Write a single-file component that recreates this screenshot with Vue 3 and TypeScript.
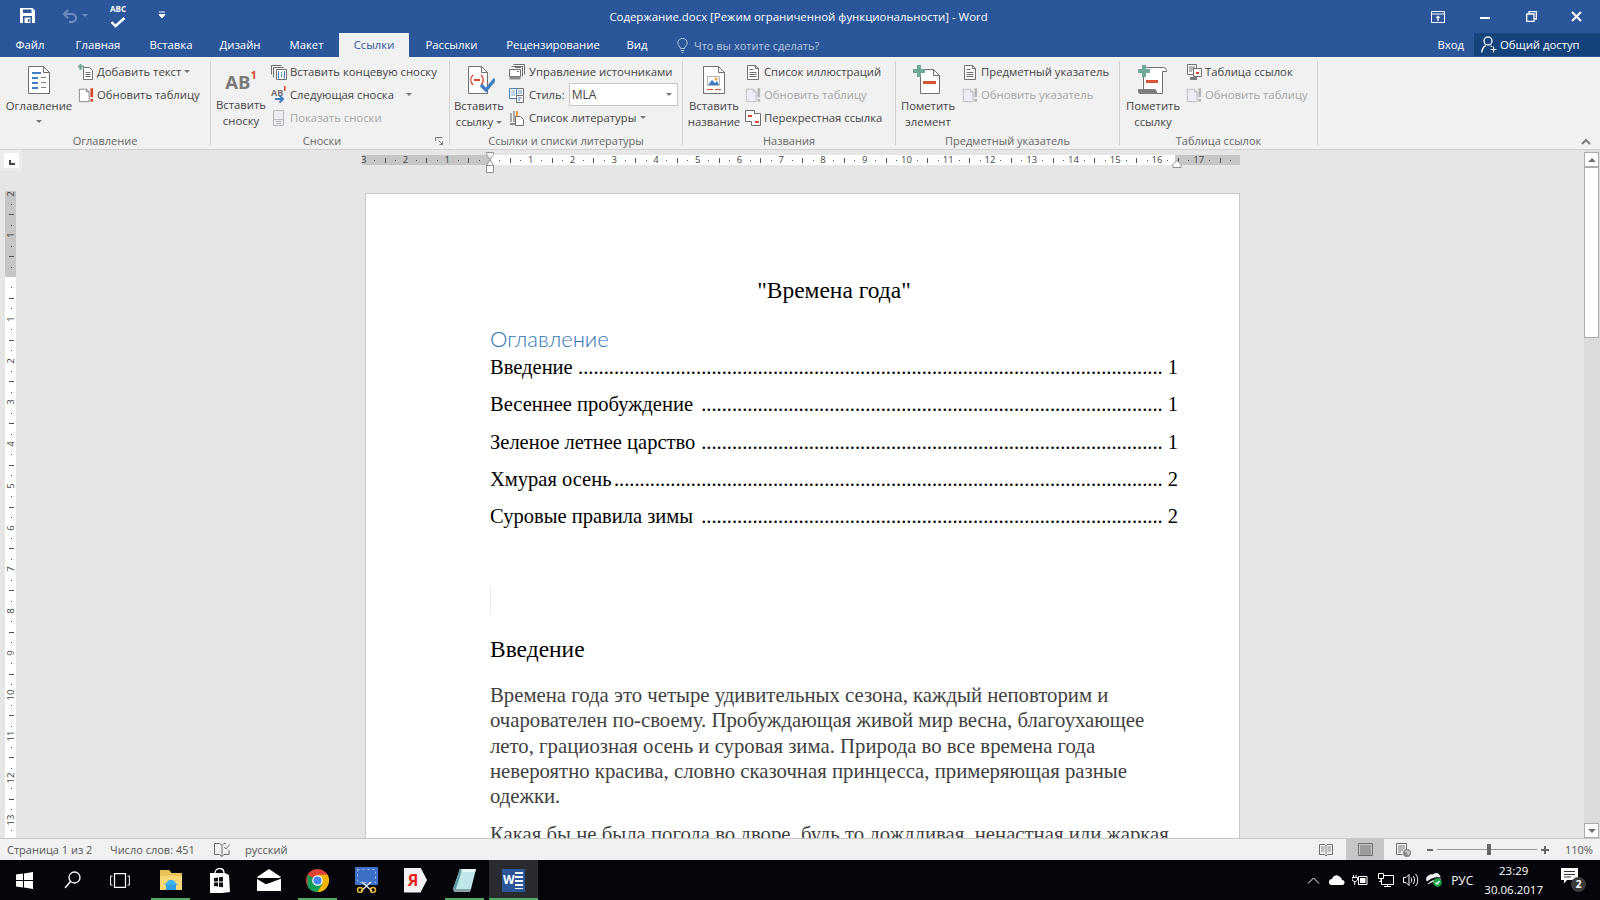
<script setup lang="ts">
import { computed } from 'vue'

const tabs = [
  { name: 'Файл', w: 60 },
  { name: 'Главная', w: 76 },
  { name: 'Вставка', w: 70 },
  { name: 'Дизайн', w: 68 },
  { name: 'Макет', w: 65 },
  { name: 'Ссылки', w: 70, active: true },
  { name: 'Рассылки', w: 85 },
  { name: 'Рецензирование', w: 118 },
  { name: 'Вид', w: 50 },
]

const toc = [
  { title: 'Введение', page: 1, dots: 114 },
  { title: 'Весеннее пробуждение', page: 1, dots: 90 },
  { title: 'Зеленое летнее царство', page: 1, dots: 90 },
  { title: 'Хмурая осень', page: 2, dots: 107 },
  { title: 'Суровые правила зимы', page: 2, dots: 90 },
]

const STEP = 41.75

// quarter-inch style marks for both rulers
function buildMarks(from: number, to: number) {
  const marks: { pos: number; kind: string; label: string }[] = []
  for (let q = from * 4; q <= to * 4; q++) {
    const rem = ((q % 4) + 4) % 4
    if (q === 0) continue
    marks.push({
      pos: (q / 4) * STEP,
      kind: rem === 0 ? 'num' : rem === 2 ? 'tick' : 'dot',
      label: rem === 0 ? String(Math.abs(q / 4)) : '',
    })
  }
  return marks
}

const hMarks = computed(() => buildMarks(-3, 17.75).map((m) => ({ ...m, pos: m.pos + 127 })))
const vMarks = computed(() => buildMarks(-2, 13.75).map((m) => ({ ...m, pos: m.pos + 86 })))
</script>

<template>
  <div class="word">
    <svg class="defs" width="0" height="0">
      <symbol id="i-update" viewBox="0 0 18 18">
        <path d="M1.500 2.500h8l3 3v11h-11z" fill="#fff" stroke="#7d7d7d" />
        <path d="M9.500 2.500v3h3" fill="none" stroke="#7d7d7d" />
        <path d="M14 1.500h3v10h-3zM14 13.500h3v3h-3z" fill="#d6492f" />
      </symbol>
      <symbol id="i-update-off" viewBox="0 0 18 18">
        <path d="M1.500 2.500h8l3 3v11h-11z" fill="#f0ecf3" stroke="#b9b9b9" />
        <path d="M9.500 2.500v3h3" fill="none" stroke="#b9b9b9" />
        <path d="M14 1.500h3v10h-3zM14 13.500h3v3h-3z" fill="#b5b5b5" />
      </symbol>
      <symbol id="i-lines" viewBox="0 0 16 18">
        <path d="M2.500 2.500h8l3 3v11h-11z" fill="#fff" stroke="#6f6f6f" />
        <path d="M10.500 2.500v3h3" fill="none" stroke="#6f6f6f" />
        <path d="M4.500 6.500h4M4.500 9.500h7M4.500 11.500h7M4.500 13.500h7" stroke="#6f6f6f" />
      </symbol>
    </svg>

    <!-- title bar -->
    <header class="titlebar">
      <div class="qat">
        <svg class="q-save" width="15" height="15" viewBox="0 0 15 15">
          <path d="M0 0h12.500L15 2.500V15H0z" fill="#fff" />
          <path d="M3 1.500h8.500v3.500H3z" fill="#2b579a" />
          <path d="M3 8h9v7H3z" fill="#2b579a" />
          <path d="M4.500 9.500h6V15h-6z" fill="#fff" />
          <path d="M8 11h1.500v3H8z" fill="#2b579a" />
        </svg>
        <svg class="q-undo" width="16" height="15" viewBox="0 0 16 15">
          <path d="M6 2 2 6l4 4M2.500 6H10a4 4 0 0 1 0 8H7" fill="none" stroke="#6f8dbb" stroke-width="2" />
        </svg>
        <i class="caret q-undo-caret" />
        <svg class="q-spell" width="16" height="18" viewBox="0 0 16 18">
          <path d="M1.500 12l4 4 9-8" fill="none" stroke="#fff" stroke-width="2.400" />
        </svg>
        <span class="q-abc">ABC</span>
        <svg class="q-more" width="8" height="8" viewBox="0 0 8 8">
          <path d="M1 1h6M1 3.500h6L4 7z" stroke="#fff" fill="#fff" />
        </svg>
      </div>
      <div class="doc-title">Содержание.docx [Режим ограниченной функциональности] - Word</div>
      <div class="win-btns">
        <svg class="w-opt" width="14" height="12" viewBox="0 0 14 12">
          <path d="M.5.500h13v11H.5zM.5 3h13" fill="none" stroke="#fff" />
          <path d="M7 4.500 4.500 7h1.800v3h1.400V7h1.800z" fill="#fff" />
        </svg>
        <svg class="w-min" width="10" height="2" viewBox="0 0 10 2"><path d="M0 0h10v2H0z" fill="#fff" /></svg>
        <svg class="w-max" width="11" height="11" viewBox="0 0 11 11">
          <path d="M3 2.500V.7h7.300V8H8.500" fill="none" stroke="#fff" stroke-width="1.300" />
          <path d="M.7 3h7.300v7.300H.7z" fill="none" stroke="#fff" stroke-width="1.300" />
        </svg>
        <svg width="11" height="11" viewBox="0 0 11 11">
          <path d="M1 1l9 9M10 1l-9 9" stroke="#fff" stroke-width="2" />
        </svg>
      </div>
    </header>

    <!-- tabs -->
    <nav class="tabs">
      <div
        v-for="tab in tabs"
        :key="tab.name"
        class="tab"
        :class="{ active: tab.active }"
        :style="{ width: `${tab.w}px` }"
      >{{ tab.name }}</div>
      <div class="tell">
        <svg width="11" height="15" viewBox="0 0 11 15">
          <path d="M3.500 10.500C3 8 .8 7.500.8 5a4.700 4.700 0 0 1 9.400 0c0 2.500-2.200 3-2.700 5.500zM3.800 12.500h3.400M4.500 14.500h2" fill="none" stroke="#b4c5dd" />
        </svg>
        <span>Что вы хотите сделать?</span>
      </div>
      <div class="login">Вход</div>
      <div class="share">
        <svg width="16" height="17" viewBox="0 0 16 17">
          <circle cx="7" cy="5" r="4" fill="none" stroke="#e6ebf3" stroke-width="1.500" />
          <path d="M.8 16.500c.3-3.500 2-6 3.900-7M9.500 9.800c.6.300 1 .5 1.400.9" fill="none" stroke="#e6ebf3" stroke-width="1.500" />
          <path d="M12.500 10.500v6M9.500 13.500h6" stroke="#e6ebf3" stroke-width="1.200" />
        </svg>
        <span>Общий доступ</span>
      </div>
    </nav>

    <!-- ribbon -->
    <section class="ribbon">
      <div class="group g1">
        <div class="group-body">
          <div class="big b1">
            <svg class="big-icon" width="32" height="32" viewBox="0 0 32 32">
              <path d="M5.500 2.500h15l6 6v21h-21z" fill="#fff" stroke="#6f6f6f" />
              <path d="M20.500 2.500v6h6" fill="none" stroke="#6f6f6f" />
              <path d="M9 8h9v2H9zM9 13h6v2H9zM9 18h6v2H9zM9 23h6v2H9z" fill="#3f7fc1" />
              <path d="M18 13h5v1h-5zM18 18h5v1h-5zM18 23h5v1h-5z" fill="#7d7d7d" />
            </svg>
            <span>Оглавление</span>
            <i class="caret caret-big" />
          </div>
          <div class="col">
            <div class="sm">
              <svg width="16" height="18" viewBox="0 0 16 18">
                <path d="M5.500 4.500h6l3 3v9h-9z" fill="#fff" stroke="#6f6f6f" />
                <path d="M7.500 9.500h5M7.500 11.500h5M7.500 13.500h5" stroke="#6f6f6f" />
                <path d="M2.500 1v6M0 3.500h6" stroke="#6ea898" stroke-width="2" />
              </svg>
              <span class="sm-t">Добавить текст</span><i class="caret caret-near" />
            </div>
            <div class="sm">
              <svg width="16" height="18"><use href="#i-update" /></svg>
              <span class="sm-t">Обновить таблицу</span>
            </div>
          </div>
        </div>
        <div class="group-label">Оглавление</div>
      </div>

      <div class="group g2">
        <div class="group-body">
          <div class="big b2">
            <div class="ab-mark"><span class="ab">AB</span><sup>1</sup></div>
            <span>Вставить</span>
            <span>сноску</span>
          </div>
          <div class="col">
            <div class="sm">
              <svg width="16" height="18" viewBox="0 0 16 18">
                <path d="M.5 2.500h10M.5 2.500v9M2.500 4.500h10M2.500 4.500v10" fill="none" stroke="#6f6f6f" />
                <path d="M5.500 6.500h10v10h-10z" fill="#fff" stroke="#6f6f6f" />
                <path d="M7.500 8v7h1M13.500 8v7h-1M10.500 9v1M10.500 11v3" fill="none" stroke="#3f7fc1" stroke-width="1.100" />
              </svg>
              <span class="sm-t">Вставить концевую сноску</span>
            </div>
            <div class="sm">
              <svg width="16" height="18" viewBox="0 0 16 18">
                <text x="0" y="10" class="ab-small">AB</text>
                <path d="M13 0h1.500v5H13z" fill="#d6492f" />
                <path d="M4 13h7M8.500 9.500 12 13l-3.500 3.500" fill="none" stroke="#3f7fc1" stroke-width="2" />
              </svg>
              <span class="sm-t">Следующая сноска</span><i class="caret caret-far" />
            </div>
            <div class="sm off">
              <svg width="16" height="18" viewBox="0 0 16 18">
                <path d="M2.500 1.500h10v15h-10z" fill="#f0ecf3" stroke="#b9b9b9" />
                <path d="M2.500 10.500h10M5 12.500h5M5 14.500h5" stroke="#b9b9b9" />
              </svg>
              <span class="sm-t">Показать сноски</span>
            </div>
          </div>
        </div>
        <div class="group-label label-short">Сноски</div>
        <svg class="launcher" width="8" height="8" viewBox="0 0 8 8">
          <path d="M.5 4V.5H7.500M7.500 7.500 3.500 3.500M7.500 4.500v3h-3" fill="none" stroke="#7d7d7d" />
        </svg>
      </div>

      <div class="group g3">
        <div class="group-body">
          <div class="big b3">
            <svg class="big-icon" width="32" height="32" viewBox="0 0 32 32">
              <path d="M5.500 2.500h13l6 6v21h-19z" fill="#fff" stroke="#6f6f6f" />
              <path d="M18.500 2.500v6h6" fill="none" stroke="#6f6f6f" />
              <path d="M10 11c-3 3-3 7 0 10M18 11c3 3 3 7 0 10" fill="none" stroke="#d6492f" stroke-width="1.400" />
              <path d="M11 15h6v2h-6z" fill="#d6492f" />
              <path d="M18 21l5 5 9-11" fill="none" stroke="#3f7fc1" stroke-width="3.400" />
            </svg>
            <span>Вставить</span>
            <span>ссылку<i class="caret caret-in" /></span>
          </div>
          <div class="col">
            <div class="sm">
              <svg width="16" height="18" viewBox="0 0 16 18">
                <path d="M4.500 1.500h11v10M2.500 3.500h11v10" fill="none" stroke="#6f6f6f" />
                <path d="M.5 6.500h11v7H.5z" fill="#fff" stroke="#6f6f6f" />
                <path d="M.5 13.500h11v3H.5z" fill="#8a8a8a" />
                <path d="M6 4.500h6M8 8.500h2" stroke="#6f6f6f" />
              </svg>
              <span class="sm-t">Управление источниками</span>
            </div>
            <div class="sm style-row">
              <svg width="16" height="18" viewBox="0 0 16 18">
                <path d="M.5 2.500h7v10h-7z" fill="#fff" stroke="#3f7fc1" />
                <path d="M7.500 2.500h7v7" fill="none" stroke="#6f6f6f" />
                <path d="M2 5h4M2 7h4M2 9h4M9 5h4M9 7h4" stroke="#7d9ec4" />
                <path d="M7.500 9.500h7v7h-7z" fill="#fff" stroke="#6f6f6f" />
                <path d="M9 12h4M9 14h2" stroke="#3f7fc1" />
              </svg>
              <span class="sm-t">Стиль:</span>
              <div class="combo"><span>MLA</span><i class="caret" /></div>
            </div>
            <div class="sm">
              <svg width="16" height="18" viewBox="0 0 16 18">
                <path d="M1 4h2v9H1zM4 2h2v11H4z" fill="#a9a9a9" />
                <path d="M7 2h2v5H7z" fill="#e8a33a" />
                <path d="M6.500 7.500h5l3 3v6h-8z" fill="#fff" stroke="#6f6f6f" />
                <path d="M1 14h5v2H1z" fill="#8a8a8a" />
              </svg>
              <span class="sm-t">Список литературы</span><i class="caret" />
            </div>
          </div>
        </div>
        <div class="group-label">Ссылки и списки литературы</div>
      </div>

      <div class="group g4">
        <div class="group-body">
          <div class="big b4">
            <svg class="big-icon" width="32" height="32" viewBox="0 0 32 32">
              <path d="M5.500 2.500h15l6 6v21h-21z" fill="#fff" stroke="#6f6f6f" />
              <path d="M20.500 2.500v6h6" fill="none" stroke="#6f6f6f" />
              <path d="M9.500 12.500h12v9h-12z" fill="#fff" stroke="#b5b5b5" />
              <path d="M10 21l4-5 3 3 2-2 2 4z" fill="#3f7fc1" />
              <circle cx="18" cy="15" r="1.500" fill="#e8a33a" />
              <path d="M9 25h6v1H9zM17 25h6v1h-6z" fill="#d6492f" />
            </svg>
            <span>Вставить</span>
            <span>название</span>
          </div>
          <div class="col">
            <div class="sm">
              <svg width="16" height="18"><use href="#i-lines" /></svg>
              <span class="sm-t">Список иллюстраций</span>
            </div>
            <div class="sm off">
              <svg width="16" height="18"><use href="#i-update-off" /></svg>
              <span class="sm-t">Обновить таблицу</span>
            </div>
            <div class="sm">
              <svg width="16" height="18" viewBox="0 0 16 18">
                <path d="M.5 1.500h9v11H.5z" fill="#fff" stroke="#6f6f6f" />
                <path d="M9.500 4.500h6v12h-9v-4" fill="#fff" stroke="#6f6f6f" />
                <path d="M3 6h4v2H3zM10 12h4v2h-4z" fill="#d6492f" />
              </svg>
              <span class="sm-t">Перекрестная ссылка</span>
            </div>
          </div>
        </div>
        <div class="group-label">Названия</div>
      </div>

      <div class="group g5">
        <div class="group-body">
          <div class="big b5">
            <svg class="big-icon" width="32" height="32" viewBox="0 0 32 32">
              <path d="M8.500 5.500h13l6 6v18h-19z" fill="#fff" stroke="#6f6f6f" />
              <path d="M21.500 5.500v6h6" fill="none" stroke="#6f6f6f" />
              <path d="M5 1h4v4h4v4H9v4H5V9H1V5h4z" fill="#6ea898" />
              <path d="M11 17h13v3H11z" fill="#d6552f" />
            </svg>
            <span>Пометить</span>
            <span>элемент</span>
          </div>
          <div class="col">
            <div class="sm">
              <svg width="16" height="18"><use href="#i-lines" /></svg>
              <span class="sm-t">Предметный указатель</span>
            </div>
            <div class="sm off">
              <svg width="16" height="18"><use href="#i-update-off" /></svg>
              <span class="sm-t">Обновить указатель</span>
            </div>
          </div>
        </div>
        <div class="group-label">Предметный указатель</div>
      </div>

      <div class="group g6">
        <div class="group-body">
          <div class="big b6">
            <svg class="big-icon" width="32" height="32" viewBox="0 0 32 32">
              <path d="M6.500 29.500v-23a3 3 0 0 1 3-3h17a3 3 0 0 1 3 3v1h-4v22z" fill="#fff" stroke="#6f6f6f" />
              <path d="M1 25h17c1 0 1.500 2 2 3s1 2 2 2H3c-2 0-2-3-2-5z" fill="#7d7d7d" />
              <path d="M5 1h4v4h4v4H9v4H5V9H1V5h4z" fill="#6ea898" />
              <path d="M9 16h12v3H9z" fill="#d6552f" />
            </svg>
            <span>Пометить</span>
            <span>ссылку</span>
          </div>
          <div class="col">
            <div class="sm">
              <svg width="16" height="18" viewBox="0 0 16 18">
                <path d="M1.500 1.500h9v10h-9z" fill="#fff" stroke="#6f6f6f" />
                <path d="M3 4h6M3 6h6M3 8h3" stroke="#6f6f6f" />
                <path d="M7.500 5.500h8v8h-8z" fill="#fff" stroke="#6f6f6f" />
                <path d="M10 9h3v2h-3z" fill="#d6492f" />
                <path d="M4 14h7v3H4z" fill="#7d7d7d" />
              </svg>
              <span class="sm-t">Таблица ссылок</span>
            </div>
            <div class="sm off">
              <svg width="16" height="18"><use href="#i-update-off" /></svg>
              <span class="sm-t">Обновить таблицу</span>
            </div>
          </div>
        </div>
        <div class="group-label">Таблица ссылок</div>
      </div>

      <svg class="collapse" width="10" height="7" viewBox="0 0 10 7">
        <path d="M1 6l4-4 4 4" fill="none" stroke="#7d7d7d" stroke-width="2" />
      </svg>
    </section>

    <!-- document area -->
    <main class="workspace">
      <div class="canvas">
        <div class="ruler-row">
          <div class="corner"><div class="corner-box"><i /></div></div>
          <div class="h-ruler">
            <div class="r-grey r-left" />
            <div class="r-white" />
            <div class="r-grey r-right" />
            <template v-for="m in hMarks" :key="m.pos">
              <span v-if="m.kind === 'num'" class="h-num" :style="{ left: `${m.pos}px` }">{{ m.label }}</span>
              <i v-else :class="`h-${m.kind}`" :style="{ left: `${m.pos}px` }" />
            </template>
            <svg class="indent-left" width="10" height="22" viewBox="0 0 10 22">
              <path d="M1.500.5h7v2L5 7.500 1.500 2.500zM5 7.500l3.500 6h-7zM1.500 13.500h7v7h-7z" fill="#fff" stroke="#8f8f8f" />
            </svg>
            <svg class="indent-right" width="10" height="8" viewBox="0 0 10 8">
              <path d="M5 .5l4 4v3H1v-3z" fill="#fff" stroke="#8f8f8f" />
            </svg>
          </div>
        </div>
        <div class="doc-row">
          <div class="v-ruler">
            <div class="v-grey" />
            <template v-for="m in vMarks" :key="m.pos">
              <span v-if="m.kind === 'num'" class="v-num" :style="{ top: `${m.pos}px` }">{{ m.label }}</span>
              <i v-else :class="`v-${m.kind}`" :style="{ top: `${m.pos}px` }" />
            </template>
          </div>
          <article class="page">
            <h1 class="doc-h">"Времена года"</h1>
            <h2 class="toc-h">Оглавление</h2>
            <div v-for="row in toc" :key="row.title" class="toc-row">
              <span class="toc-title">{{ row.title }}</span>
              <span class="toc-dots">{{ '.'.repeat(row.dots) }}</span>
              <span class="toc-page">{{ row.page }}</span>
            </div>
            <div class="empty-mark" />
            <h3 class="intro-h">Введение</h3>
            <p class="para">Времена года это четыре удивительных сезона, каждый неповторим и очарователен по-своему. Пробуждающая живой мир весна, благоухающее лето, грациозная осень и суровая зима. Природа во все времена года невероятно красива, словно сказочная принцесса, примеряющая разные одежки.</p>
            <p class="para para-next">Какая бы не была погода во дворе, будь то дождливая, ненастная или жаркая,</p>
          </article>
        </div>
      </div>
      <aside class="scrollbar">
        <div class="sb-btn"><i class="sb-up" /></div>
        <div class="sb-thumb" />
        <div class="sb-track" />
        <div class="sb-btn"><i class="sb-down" /></div>
      </aside>
    </main>

    <!-- status bar -->
    <footer class="status">
      <span class="st-page">Страница 1 из 2</span>
      <span class="st-words">Число слов: 451</span>
      <svg class="st-book" width="16" height="14" viewBox="0 0 16 14">
        <path d="M.5.500h5l2.500 2v11l-2.500-2h-5zM8 2.500l2-2h2M8 13.500l2-2h5V7" fill="none" stroke="#6f6f6f" />
        <path d="M10 4l2 2 3.500-4.500" fill="none" stroke="#6f6f6f" />
      </svg>
      <span class="st-lang">русский</span>
      <svg class="st-read" width="14" height="14" viewBox="0 0 14 14">
        <path d="M.5 1.500h5.500l1 1 1-1h5.500v10h-5l-1.500 1.500-1.500-1.500h-5z" fill="none" stroke="#6f6f6f" />
        <path d="M2 4h3.500M2 6h3.500M2 8h3.500M8.500 4H12M8.500 6H12M8.500 8H12M7 2.500v9" stroke="#8a8a8a" />
      </svg>
      <div class="st-print">
        <svg width="15" height="13" viewBox="0 0 15 13">
          <path d="M.5.500h14v12H.5z" fill="none" stroke="#6f6f6f" />
          <path d="M2 3h11M2 5h11M2 7h11M2 9h11M2 11h11" stroke="#6f6f6f" />
        </svg>
      </div>
      <svg class="st-web" width="15" height="14" viewBox="0 0 15 14">
        <path d="M.5.500h10v8M.5.500v11h6" fill="none" stroke="#6f6f6f" />
        <path d="M2 3h7M2 5h7M2 7h5M2 9h3" stroke="#7d7d7d" />
        <circle cx="11" cy="10" r="4" fill="#8a8a8a" />
        <path d="M8 9h3v2l2 1 1-3-3-2z" fill="#cfcfcf" />
      </svg>
      <i class="z-minus" />
      <div class="z-slider"><i /></div>
      <i class="z-plus" />
      <span class="z-pct">110%</span>
    </footer>

    <!-- windows taskbar -->
    <footer class="taskbar">
      <div class="tb-slot tb-sys">
        <svg width="17" height="17" viewBox="0 0 17 17">
          <path d="M0 2.500 7 1.500v6.500H0zM8 1.400 17 0v8H8zM0 9h7v6.500L0 14.500zM8 9h9v8l-9-1.400z" fill="#fff" />
        </svg>
      </div>
      <div class="tb-slot tb-sys">
        <svg width="17" height="18" viewBox="0 0 17 18">
          <circle cx="10.500" cy="6.500" r="5.500" fill="none" stroke="#fff" stroke-width="1.300" />
          <path d="M6.500 10.500 1 17" stroke="#fff" stroke-width="1.500" />
        </svg>
      </div>
      <div class="tb-slot tb-sys">
        <svg width="20" height="15" viewBox="0 0 20 15">
          <path d="M4.500.7h11v13.600h-11z" fill="none" stroke="#fff" stroke-width="1.200" />
          <path d="M2.500 3H.6v9h1.900M17.500 3h1.900v9h-1.900" fill="none" stroke="#fff" />
        </svg>
      </div>
      <div class="tb-gap" />
      <div class="tb-slot on">
        <svg width="22" height="20" viewBox="0 0 22 20">
          <path d="M0 0h9l2 2v2H0z" fill="#e8bd52" />
          <path d="M0 3h22v17H0z" fill="#f7d774" />
          <path d="M0 3h22v3H0z" fill="#e9c25a" />
          <path d="M6 13h10v7H6z" fill="#2f9fe0" />
          <path d="M9 10h4l5 5H4z" fill="#3fb3ee" />
        </svg>
      </div>
      <div class="tb-slot">
        <svg width="21" height="25" viewBox="0 0 21 25">
          <path d="M6 5c0-6 9-6 9 0" fill="none" stroke="#fff" stroke-width="1.300" />
          <path d="M1 5h15l4 2 1 17-8 1H1z" fill="#fff" />
          <path d="M5 10l4-.5v4H5zM10 9.300l4-.5v4.700h-4zM5 14.500h4v4l-4-.5zM10 14.500h4v4.700l-4-.5z" fill="#111" />
        </svg>
      </div>
      <div class="tb-slot">
        <svg width="24" height="22" viewBox="0 0 24 22">
          <path d="M0 8 12 0l12 8v1H0z" fill="#fff" />
          <path d="M0 9l9 6L24 9v13H0z" fill="#fff" />
          <path d="M0 9l9 5.500L24 9" fill="none" stroke="#0a0a0a" stroke-width="1.500" />
        </svg>
      </div>
      <div class="tb-slot on">
        <svg width="23" height="23" viewBox="0 0 48 48">
          <circle cx="24" cy="24" r="24" fill="#db4437" />
          <path d="M24 24 44.800 36A24 24 0 0 1 24 48 24 24 0 0 1 3.200 36L3 12z" fill="#0f9d58" />
          <path d="M24 12h20.800A24 24 0 0 1 44.800 36 24 24 0 0 1 24 48l10.400-18z" fill="#f4b400" />
          <circle cx="24" cy="24" r="11" fill="#fff" />
          <circle cx="24" cy="24" r="8.500" fill="#4285f4" />
        </svg>
      </div>
      <div class="tb-slot">
        <svg width="23" height="26" viewBox="0 0 23 26">
          <path d="M0 0h23v18H0z" fill="#3d6fc7" />
          <path d="M2.500 2.500h18v13h-18z" fill="none" stroke="#a9c4ee" stroke-dasharray="2 3" />
          <path d="M7 15l10 9M16 15 6 24" stroke="#e8e8e8" stroke-width="1.400" />
          <circle cx="5" cy="23" r="2.500" fill="none" stroke="#e9b93a" stroke-width="1.500" />
          <circle cx="18" cy="23" r="2.500" fill="none" stroke="#e9b93a" stroke-width="1.500" />
        </svg>
      </div>
      <div class="tb-slot">
        <div class="ya-tag"><span>Я</span></div>
      </div>
      <div class="tb-slot on">
        <svg width="24" height="23" viewBox="0 0 24 23">
          <path d="M7 0h16l-5 20H0z" fill="#bfe6e8" />
          <path d="M7 0h16l-1 3H6z" fill="#e7f6f6" />
          <path d="M0 20l7-20 2 1-6 19z" fill="#5f9ca4" />
          <path d="M0 20h18l-1 3H1z" fill="#8aa2a6" />
        </svg>
      </div>
      <div class="tb-slot on word-on">
        <div class="word-icon"><b>W</b><i /></div>
      </div>
      <div class="tray">
        <svg width="13" height="7" viewBox="0 0 13 7"><path d="M1 6.500 6.500 1 12 6.500" fill="none" stroke="#fff" /></svg>
        <svg class="t-cloud" width="16" height="10" viewBox="0 0 16 10">
          <path d="M3 10a3 3 0 0 1 0-6 4.500 4.500 0 0 1 8-2 3.500 3.500 0 0 1 2 3 2.500 2.500 0 0 1 0 5z" fill="#fff" />
        </svg>
        <svg class="t-bat" width="16" height="10" viewBox="0 0 16 10">
          <path d="M1.500 0v2.500M4 0v2.500M0 2.500h5.500V5l-2 1.500H2L0 5zM2.700 6.500V10" fill="none" stroke="#fff" />
          <path d="M6.500 1.500h8.500v8H6.500z" fill="none" stroke="#fff" />
          <path d="M8 3h5.500v5H8z" fill="#fff" />
        </svg>
        <svg class="t-net" width="16" height="14" viewBox="0 0 16 14">
          <path d="M3.500 2.500h12v9h-12zM9.500 11.500v2M6 13.500h7" fill="none" stroke="#fff" />
          <path d="M.5.500h5v5h-5zM3 5.500v3H1" fill="#000" stroke="#fff" />
        </svg>
        <svg class="t-vol" width="16" height="14" viewBox="0 0 16 14">
          <path d="M.5 4.500h2.500l3-3v11l-3-3H.5z" fill="none" stroke="#fff" />
          <path d="M8 4.500c1 1.500 1 3.500 0 5M10 3c2 2 2 6 0 8M12.500 1c3 3 3 9 0 12" fill="none" stroke="#fff" />
        </svg>
        <svg class="t-disk" width="16" height="14" viewBox="0 0 16 14">
          <path d="M1 8c-2-4 3-7 6-6 3-3 7-1 7 2-5-1-9 1-13 4zM2 11c3-3 8-5 13-5" fill="#eee" stroke="#eee" />
          <circle cx="11.500" cy="9.500" r="4.300" fill="#18a54a" />
          <path d="M9.500 9.500l1.500 1.500 2.500-3" fill="none" stroke="#fff" stroke-width="1.200" />
        </svg>
        <span class="t-lang">РУС</span>
        <div class="t-clock"><span>23:29</span><span>30.06.2017</span></div>
        <div class="t-notify">
          <svg width="17" height="16" viewBox="0 0 17 16">
            <path d="M0 0h17v12H6l-3 3.500V12H0z" fill="#fff" />
            <path d="M3 3.500h11M3 6.500h11M3 9h7" stroke="#333" />
          </svg>
          <span class="t-badge">2</span>
        </div>
      </div>
    </footer>
  </div>
</template>

<style scoped>
.word {
  width: 1600px;
  height: 900px;
  display: flex;
  flex-direction: column;
  overflow: hidden;
  font-family: "Open Sans", "Noto Sans", sans-serif;
  font-size: 11.3px;
  color: #444;
  background: #e6e6e6;
}
.defs { position: absolute; }
.caret {
  display: inline-block;
  width: 0;
  height: 0;
  border: 3px solid transparent;
  border-top: 3px solid #777;
  border-bottom: 0;
  margin-left: 4px;
}

.titlebar {
  height: 33px;
  flex: none;
  background: #2b579a;
  display: flex;
  align-items: center;
  color: #fff;
  position: relative;
}
.qat {
  width: 200px;
  height: 33px;
  position: relative;
}
.qat > * { position: absolute; }
.q-save { left: 20px; top: 8px; }
.q-undo { left: 62px; top: 8px; }
.q-undo-caret { left: 82px; top: 14px; border-top-color: #6f8dbb; margin: 0; }
.q-spell { left: 110px; top: 10px; }
.q-abc {
  left: 110px;
  top: 4px;
  font-size: 8px;
  font-weight: 700;
  line-height: 10px;
}
.q-more { left: 158px; top: 11px; }
.doc-title {
  position: absolute;
  left: 0;
  right: 3px;
  text-align: center;
  font-size: 11.4px;
  line-height: 33px;
}
.win-btns {
  margin-left: auto;
  margin-right: 18px;
  display: flex;
  align-items: center;
  position: relative;
}
.w-min { margin-left: 35px; margin-top: 3px; }
.w-max { margin-left: 36px; margin-right: 34px; }

.tabs {
  height: 24px;
  flex: none;
  background: #2b579a;
  display: flex;
  color: #fff;
}
.tab {
  text-align: center;
  line-height: 23px;
}
.tab.active {
  background: #f1f1f1;
  color: #2b579a;
}
.tell {
  display: flex;
  align-items: center;
  gap: 6px;
  margin-left: 15px;
  color: #b4c5dd;
  font-size: 11px;
}
.login { margin-left: auto; line-height: 23px; padding-right: 10px; }
.share {
  width: 126px;
  height: 23px;
  background: #15427a;
  display: flex;
  align-items: center;
  gap: 3px;
  padding-left: 7px;
  box-sizing: border-box;
}

.ribbon {
  height: 93px;
  flex: none;
  background: #f1f1f1;
  border-bottom: 1px solid #d2d2d2;
  box-sizing: border-box;
  display: flex;
  padding-top: 4px;
  position: relative;
}
.group {
  height: 84px;
  border-right: 1px solid #d2d2d2;
  box-sizing: border-box;
  display: flex;
  flex-direction: column;
  position: relative;
}
.g1 { width: 211px; }
.g2 { width: 239px; }
.g3 { width: 233px; }
.g4 { width: 213px; }
.g5 { width: 224px; }
.g6 { width: 198px; }
.group-body { flex: 1; min-height: 0; display: flex; }
.group-label {
  height: 16px;
  flex: none;
  line-height: 24px;
  text-align: center;
  font-size: 11px;
  color: #666;
}
.label-short { padding-right: 16px; }
.launcher { position: absolute; right: 6px; bottom: 0; }
.big {
  flex: none;
  display: flex;
  flex-direction: column;
  align-items: center;
  line-height: 16px;
}
.big-icon { margin-top: 3px; margin-bottom: 2px; height: 32px; flex: none; }
.b1 { width: 78px; }
.b2 { width: 60px; }
.b3 { width: 58px; }
.b4 { width: 62px; }
.b5 { width: 64px; margin-right: 2px; }
.b6 { width: 66px; }
.caret-big { margin: 6px 0 0; }
.caret-in { margin-left: 3px; vertical-align: 2px; }
.ab-mark {
  height: 37px;
  padding-top: 10px;
  box-sizing: border-box;
  color: #7a7a7a;
  display: flex;
  align-items: flex-start;
}
.ab { font-size: 18.5px; font-weight: 700; line-height: 22px; }
.ab-mark sup {
  font-size: 11px;
  font-weight: 700;
  color: #d6492f;
  line-height: 11px;
  margin-top: -2px;
}
.ab-small { font-size: 9px; font-weight: 700; fill: #777; font-family: "Open Sans", sans-serif; }
.col { display: flex; flex-direction: column; margin-top: -1px; }
.sm {
  height: 23px;
  display: flex;
  align-items: center;
  white-space: nowrap;
}
.sm > svg { flex: none; }
.sm-t { margin-left: 3px; }
.g3 .col { margin-left: 1px; }
.g3 .sm-t { margin-left: 4px; }
.g5 .sm-t { margin-left: 2px; }
.g5 .sm > svg { margin-right: 1px; }
.off { color: #a6a6a6; }
.caret-near { margin-left: 3px; }
.caret-far { margin-left: 12px; }
.style-row { width: 170px; }
.combo {
  margin-left: 4px;
  width: 109px;
  height: 23px;
  background: #fff;
  border: 1px solid #c6c6c6;
  box-sizing: border-box;
  display: flex;
  align-items: center;
  justify-content: space-between;
  padding: 0 5px 0 2px;
  font-size: 12px;
}
.collapse { position: absolute; right: 9px; bottom: 4px; }

.workspace {
  flex: 1;
  min-height: 0;
  display: flex;
  overflow: hidden;
  background: #e6e6e6;
}
.canvas {
  flex: 1;
  min-width: 0;
  display: flex;
  flex-direction: column;
}
.ruler-row {
  height: 41px;
  flex: none;
  display: flex;
  align-items: flex-start;
}
.corner {
  width: 22px;
  height: 21px;
  background: #ececec;
  box-sizing: border-box;
  padding: 3px 3.5px;
}
.corner-box {
  width: 15px;
  height: 15px;
  background: #fff;
  position: relative;
}
.corner-box i {
  position: absolute;
  left: 5px;
  top: 7px;
  width: 6px;
  height: 5px;
  border-left: 2px solid #444;
  border-bottom: 2px solid #444;
  box-sizing: border-box;
}
.h-ruler {
  margin-left: 340px;
  margin-top: 5px;
  width: 878px;
  height: 10px;
  display: flex;
  position: relative;
  background: #fff;
}
.r-grey { background: #c6c6c6; }
.r-left { width: 127px; }
.r-white { width: 686px; }
.r-right { width: 65px; }
.h-num {
  position: absolute;
  top: -1px;
  width: 16px;
  margin-left: -8px;
  text-align: center;
  font-size: 9.5px;
  line-height: 12px;
  color: #444;
}
.h-dot, .h-tick { position: absolute; width: 1px; background: #555; }
.h-dot { top: 5px; height: 1px; }
.h-tick { top: 3px; height: 5px; }
.indent-left { position: absolute; left: 122.5px; top: -3px; }
.indent-right { position: absolute; left: 810px; top: 5px; }

.doc-row {
  flex: 1;
  min-height: 0;
  display: flex;
  overflow: hidden;
}
.v-ruler {
  flex: none;
  margin-left: 5px;
  width: 11px;
  background: #fff;
  position: relative;
}
.v-grey {
  position: absolute;
  left: 0;
  top: 0;
  width: 100%;
  height: 86px;
  background: #c6c6c6;
}
.v-num {
  position: absolute;
  left: 0;
  width: 11px;
  height: 12px;
  margin-top: -6px;
  text-align: center;
  font-size: 9.5px;
  line-height: 12px;
  color: #444;
  transform: rotate(-90deg);
}
.v-dot, .v-tick { position: absolute; height: 1px; background: #555; }
.v-dot { left: 6px; width: 1px; }
.v-tick { left: 4px; width: 5px; }

.page {
  flex: none;
  margin-left: 349px;
  margin-top: 2px;
  width: 875px;
  height: 800px;
  background: #fff;
  border: 1px solid #c6c6c6;
  box-sizing: border-box;
  padding: 83px 61px 0 124px;
  font-family: "Liberation Serif", "Times New Roman", serif;
  color: #000;
}
.doc-h {
  margin: 0 0 20px;
  font-size: 23.47px;
  font-weight: 400;
  line-height: 26px;
  text-align: center;
  padding-right: 0;
}
.toc-h {
  margin: 0;
  font-family: Lato, "Open Sans", sans-serif;
  font-size: 22px;
  font-weight: 300;
  line-height: 32px;
  color: #2e74b5;
}
.toc-row {
  height: 24px;
  margin-bottom: 13.3px;
  display: flex;
  justify-content: space-between;
  font-size: 20.53px;
  line-height: 24px;
  white-space: nowrap;
}
.toc-title { flex: none; }
.toc-dots { flex: none; margin-left: auto; }
.toc-page { flex: none; margin-left: 5px; }
.empty-mark {
  height: 26px;
  margin-top: 60px;
  border-left: 1px solid #e8e8e8;
}
.intro-h {
  margin: 20px 0 19px;
  font-size: 23.47px;
  font-weight: 400;
  line-height: 30px;
}
.para {
  margin: 0;
  font-size: 20.75px;
  line-height: 25.3px;
  color: #404040;
  max-width: 687px;
}
.para-next { margin-top: 12px; white-space: nowrap; }

.scrollbar {
  flex: none;
  width: 16px;
  display: flex;
  flex-direction: column;
  background: #dcdcdc;
  padding-top: 2px;
  box-sizing: border-box;
}
.sb-btn {
  width: 15px;
  height: 15px;
  flex: none;
  background: #fff;
  border: 1px solid #ababab;
  box-sizing: border-box;
  display: flex;
  align-items: center;
  justify-content: center;
}
.sb-up, .sb-down { width: 0; height: 0; border: 4px solid transparent; }
.sb-up { border-bottom: 4px solid #6f6f6f; border-top: 0; }
.sb-down { border-top: 4px solid #6f6f6f; border-bottom: 0; }
.sb-thumb {
  width: 15px;
  height: 171px;
  flex: none;
  background: #fff;
  border: 1px solid #ababab;
  box-sizing: border-box;
}
.sb-track { flex: 1; }

.status {
  height: 22px;
  flex: none;
  background: #f1f1f1;
  border-top: 1px solid #c6c6c6;
  box-sizing: border-box;
  display: flex;
  align-items: center;
  color: #555;
  font-size: 11px;
}
.st-page { margin-left: 7px; width: 103px; }
.st-words { width: 104px; }
.st-book { flex: none; }
.st-lang { margin-left: 15px; }
.st-read { margin-left: auto; flex: none; }
.st-print {
  margin-left: 13px;
  width: 38px;
  height: 21px;
  background: #c6c6c6;
  display: flex;
  align-items: center;
  justify-content: center;
}
.st-web { margin-left: 12px; flex: none; }
.z-minus {
  margin-left: 16px;
  width: 6px;
  height: 2px;
  background: #666;
}
.z-slider {
  margin-left: 4px;
  width: 100px;
  height: 1px;
  background: #999;
  position: relative;
}
.z-slider i {
  position: absolute;
  left: 50px;
  top: -5px;
  width: 4px;
  height: 11px;
  background: #666;
}
.z-plus {
  margin-left: 4px;
  width: 8px;
  height: 8px;
  background:
    linear-gradient(#666, #666) center / 8px 2px no-repeat,
    linear-gradient(#666, #666) center / 2px 8px no-repeat;
}
.z-pct { margin-left: 16px; width: 35px; }

.taskbar {
  height: 40px;
  flex: none;
  background: #04060c;
  display: flex;
  color: #fff;
}
.tb-slot {
  width: 49px;
  height: 40px;
  flex: none;
  display: flex;
  align-items: center;
  justify-content: center;
  box-sizing: border-box;
  position: relative;
}
.tb-sys { width: 48px; }
.tb-gap { width: 2px; }
.tb-slot.on::after {
  content: "";
  position: absolute;
  left: 5px;
  right: 5px;
  bottom: 0;
  height: 2px;
  background: #52ad63;
}
.word-on { background: #2a2b2e; }
.word-on.on::after { left: 0; right: 0; }
.ya-tag {
  width: 23px;
  height: 25px;
  background: #f2f2f2;
  clip-path: polygon(0 0, 72% 0, 100% 50%, 72% 100%, 0 100%);
  display: flex;
  align-items: center;
  justify-content: center;
  padding-right: 5px;
  box-sizing: border-box;
}
.ya-tag span { color: #e8201c; font-weight: 700; font-size: 16px; line-height: 25px; }
.word-icon {
  width: 23px;
  height: 23px;
  background: #2b579a;
  position: relative;
}
.word-icon b {
  position: absolute;
  left: 1px;
  top: 3px;
  color: #fff;
  font-size: 12px;
  line-height: 16px;
}
.word-icon i {
  position: absolute;
  right: 2px;
  top: 3px;
  width: 8px;
  height: 17px;
  background: repeating-linear-gradient(#fff 0 2px, #2b579a 2px 4px);
}
.tray {
  margin-left: auto;
  display: flex;
  align-items: center;
  font-size: 12px;
  padding-right: 14px;
}
.t-cloud { margin-left: 9px; }
.t-bat { margin-left: 7px; }
.t-net { margin-left: 10px; }
.t-vol { margin-left: 9px; }
.t-disk { margin-left: 7px; }
.t-lang { margin-left: 9px; }
.t-clock {
  margin-left: 11px;
  display: flex;
  flex-direction: column;
  align-items: center;
  line-height: 19px;
  font-size: 11.5px;
}
.t-notify {
  margin-left: 18px;
  position: relative;
  width: 25px;
  height: 24px;
}
.t-badge {
  position: absolute;
  right: 0;
  bottom: 0;
  width: 15px;
  height: 15px;
  border-radius: 50%;
  background: #3a3a3a;
  font-size: 10px;
  font-weight: 700;
  line-height: 15px;
  text-align: center;
}
</style>

<style>
html, body { margin: 0; padding: 0; overflow: hidden; }
</style>
